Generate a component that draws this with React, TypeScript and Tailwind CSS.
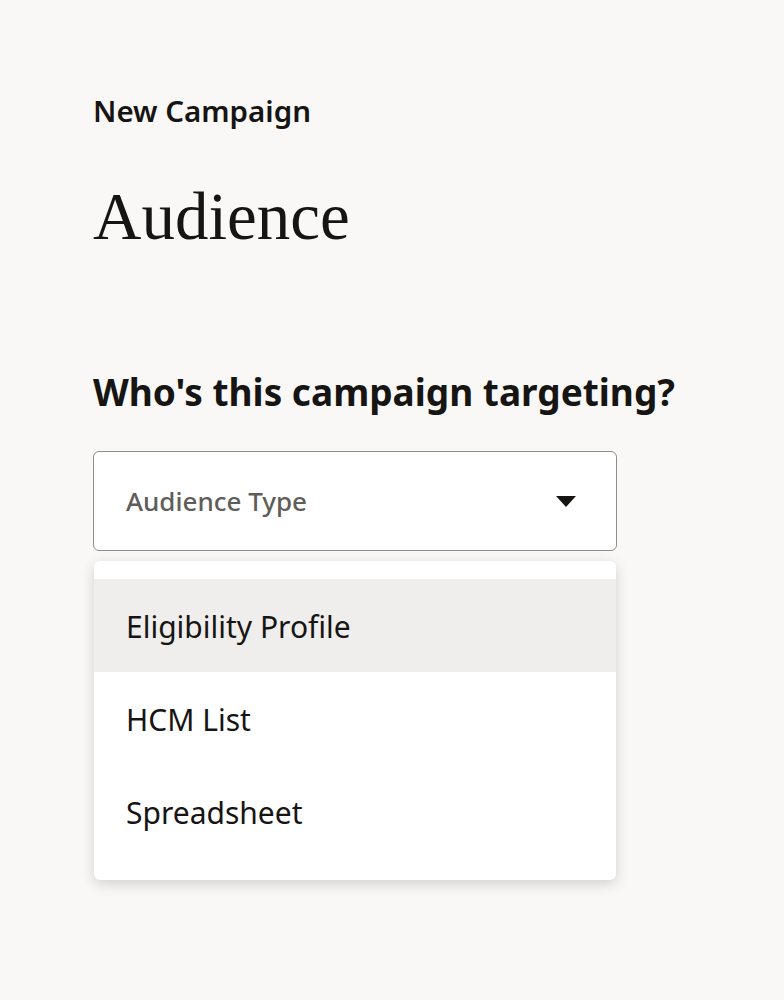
import React from "react";

const sans = { fontFamily: '"Noto Sans", "Open Sans", sans-serif' };

export default function App() {
  const items = ["Eligibility Profile", "HCM List", "Spreadsheet"];
  return (
    <div className="min-h-[1000px] w-full bg-[#f9f8f6] pl-[93px] pt-[93px] text-[#161513]" style={sans}>
      <div className="text-[29.5px] font-semibold leading-[36px]">New Campaign</div>
      <h1
        className="mt-[54px] text-[67px] leading-[67px]"
        style={{ fontFamily: '"Liberation Serif", "DejaVu Serif", serif' }}
      >
        Audience
      </h1>
      <h2 className="mt-[119px] text-[37px] font-bold leading-[46px]">Who's this campaign targeting?</h2>
      <div className="mt-[36px] w-[524px]">
        <div className="flex h-[100px] items-center justify-between rounded-[6px] border border-[#8f8d8a] bg-white pl-[32px] pr-[40px]">
          <span className="text-[26px] font-medium text-[#5f5d5a]">Audience Type</span>
          <svg width="20" height="11" viewBox="0 0 20 11">
            <path d="M0 0 H20 L10 11 Z" fill="#161513" />
          </svg>
        </div>
        <div className="mt-[10px] ml-px w-[522px] rounded-[6px] bg-white pt-[18px] pb-[22px] shadow-[0_4px_14px_rgba(0,0,0,0.16)]">
          {items.map((it, i) => (
            <div
              key={it}
              className={`flex h-[93px] items-center pl-[32px] pt-[2px] text-[30px] ${i === 0 ? "bg-[#efeeec]" : ""}`}
            >
              {it}
            </div>
          ))}
        </div>
      </div>
    </div>
  );
}
